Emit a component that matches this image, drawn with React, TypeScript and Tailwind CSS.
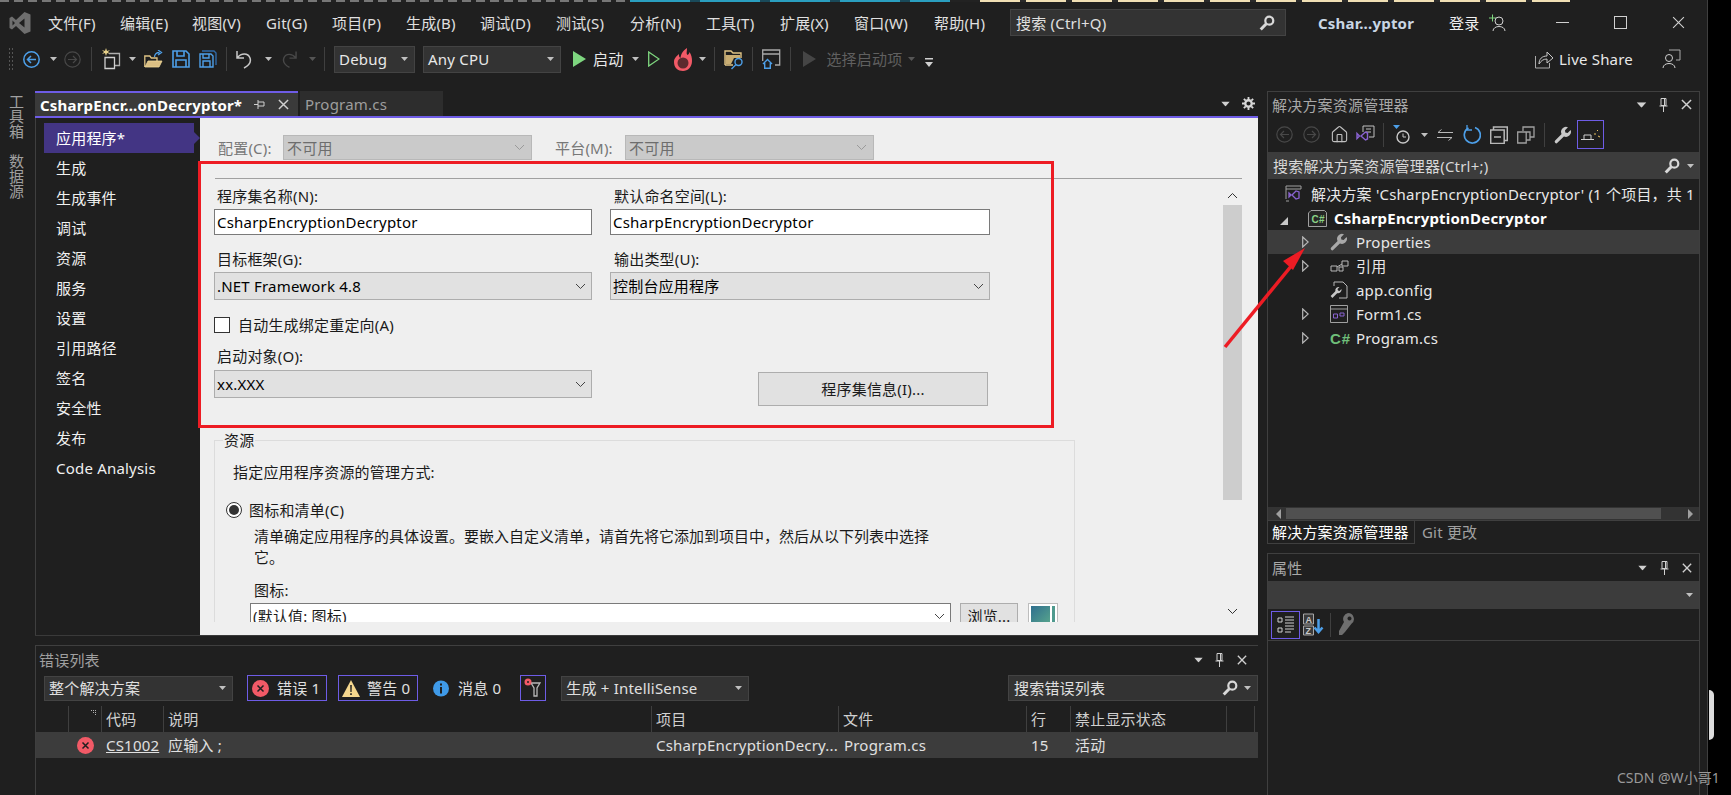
import { House } from "lucide-react";

type P = { className?: string };

const Caret = ({ className = "", fill = "#c0c0c0" }: P & { fill?: string }) => (
  <svg width="7" height="4" viewBox="0 0 7 4" className={`shrink-0 ${className}`}>
    <path d="M0 0h7L3.5 4z" fill={fill} />
  </svg>
);

const Sep = ({ className = "" }: P) => <div className={`h-[24px] w-px shrink-0 bg-[#3f3f3f] ${className}`} />;

const Chevron = ({ className = "", stroke = "#555" }: P & { stroke?: string }) => (
  <svg width="11" height="7" viewBox="0 0 11 7" fill="none" className={`shrink-0 ${className}`}>
    <path d="M1 1l4.5 4.5L10 1" stroke={stroke} />
  </svg>
);

const CloseX = ({ size = 12, stroke = "#d0d0d0", width = 1.6, className = "" }: P & { size?: number; stroke?: string; width?: number }) => (
  <svg width={size} height={size} viewBox="0 0 12 12" className={`shrink-0 ${className}`}>
    <path d="M1 1l10 10M11 1L1 11" stroke={stroke} strokeWidth={width} />
  </svg>
);

const Pin = ({ className = "" }: P) => (
  <svg width="9" height="14" viewBox="0 0 9 14" fill="none" className={`shrink-0 ${className}`}>
    <path d="M2 .5h5v7H2zM.5 8h8M4.500 8v6M5.500 1v6" stroke="#d0d0d0" />
  </svg>
);

const Magnifier = ({ className = "" }: P) => (
  <svg width="16" height="16" viewBox="0 0 16 16" fill="none" className={`shrink-0 ${className}`}>
    <circle cx="10.300" cy="5.700" r="4" stroke="#d8d8d8" strokeWidth="2.200" />
    <path d="M7.300 8.700L1.700 14.500" stroke="#d8d8d8" strokeWidth="3" />
  </svg>
);

const ArrowCircle = ({ color, dir, className = "", width = 1.2 }: P & { color: string; dir: "l" | "r"; width?: number }) => (
  <svg width="17" height="17" viewBox="0 0 17 17" fill="none" className={`shrink-0 ${className}`}>
    <circle cx="8.500" cy="8.500" r="7.700" stroke={color} strokeWidth={width} />
    <path d={dir === "l" ? "M13 8.500H4.500M8 5L4.500 8.500 8 12" : "M4 8.500h8.500M9 5l3.500 3.500L9 12"} stroke={color} strokeWidth={width} />
  </svg>
);

const WrenchIcon = ({ color = "#c8c8c8", className = "" }: P & { color?: string }) => (
  <svg width="18" height="18" viewBox="0 0 18 18" className={`shrink-0 ${className}`}>
    <path d="M2.300 15.700L9.500 8.500" stroke={color} strokeWidth="3.200" strokeLinecap="round" />
    <path d="M7.700 8.300a5 5 0 0 1 6.300-7l-3 3 .3 2.300 2.300.3 3-3a5 5 0 0 1-7 6.300z" fill={color} />
  </svg>
);

const CsBox = () => (
  <svg width="19" height="17" viewBox="0 0 19 17" fill="none" className="shrink-0">
    <path d="M3 .5h13.500L18.500 2.500v14H.5V3z" fill="#252525" stroke="#a0a0a0" />
    <text x="3.500" y="12.500" fontSize="10" fontWeight="700" fill="#89d185" fontFamily="Liberation Sans">C#</text>
  </svg>
);

const ErrorDot = ({ size = 17 }: { size?: number }) => (
  <svg width={size} height={size} viewBox="0 0 17 17" className="shrink-0">
    <circle cx="8.500" cy="8.500" r="8.500" fill="#f25a67" />
    <path d="M5.500 5.500l6 6M11.500 5.500l-6 6" stroke="#1f1f1f" strokeWidth="1.500" />
  </svg>
);

const menus = [
  { label: "文件(F)", w: "w-[72px]" },
  { label: "编辑(E)", w: "w-[72px]" },
  { label: "视图(V)", w: "w-[74px]" },
  { label: "Git(G)", w: "w-[66px]" },
  { label: "项目(P)", w: "w-[74px]" },
  { label: "生成(B)", w: "w-[74px]" },
  { label: "调试(D)", w: "w-[76px]" },
  { label: "测试(S)", w: "w-[74px]" },
  { label: "分析(N)", w: "w-[76px]" },
  { label: "工具(T)", w: "w-[74px]" },
  { label: "扩展(X)", w: "w-[74px]" },
  { label: "窗口(W)", w: "w-[80px]" },
  { label: "帮助(H)", w: "w-[75px]" },
];
const pages = ["生成", "生成事件", "调试", "资源", "服务", "设置", "引用路径", "签名", "安全性", "发布", "Code Analysis"];

const MenuBar = () => (
  <div className="flex h-[41px] shrink-0 items-center">
    <svg width="22" height="24" viewBox="0 0 22 24" className="ml-[9px] mr-[5px] shrink-0">
      <path d="M15.500 1L21.500 3.500v17L15.500 23 7 15l-4 3.500-2.500-1.500V7l2.500-1.500L7 9zM15.500 7.500L10 12l5.500 4.500zM3.500 9.500v5L6 12z" fill="#6e6e6e" fillRule="evenodd" />
    </svg>
    {menus.map((m) => (
      <span key={m.label} className={`${m.w} shrink-0 whitespace-nowrap pl-[12px] text-[#e0e0e0]`}>
        {m.label}
      </span>
    ))}
    <div className="ml-[13px] flex h-[27px] w-[276px] shrink-0 items-center justify-between border border-[#434343] bg-[#333333] pl-[5px] pr-[10px] text-[#e0e0e0]">
      <span>搜索 (Ctrl+Q)</span>
      <Magnifier />
    </div>
    <span className="ml-[32px] w-[131px] shrink-0 font-bold text-[#c9d6e4]">Cshar...yptor</span>
    <span className="shrink-0 text-[#f0f0f0]">登录</span>
    <svg width="18" height="20" viewBox="0 0 18 20" fill="none" className="ml-[10px] shrink-0">
      <path d="M0 5h7M3.500 1.500v7" stroke="#7fd67f" />
      <circle cx="10" cy="8" r="4" stroke="#d0d0d0" />
      <path d="M4 18c0-6 12-6 12 0" stroke="#d0d0d0" />
    </svg>
    <div className="ml-[49px] h-px w-[13px] shrink-0 bg-[#d0d0d0]" />
    <div className="ml-[45px] h-[13px] w-[13px] shrink-0 border border-[#d0d0d0]" />
    <CloseX size={13} width={1} className="ml-[45px]" />
  </div>
);

const ToolBar = () => (
  <div className="flex h-[32px] shrink-0 items-center pl-[8px] pr-[26px] text-[#e8e8e8]">
    <div className="h-[24px] w-[6px] shrink-0 bg-[radial-gradient(#555_1px,transparent_1px)] bg-[length:3px_4px]" />
    <ArrowCircle color="#4d9fe8" dir="l" width={1.5} className="ml-[9px]" />
    <Caret className="ml-[10px]" />
    <ArrowCircle color="#484848" dir="r" className="ml-[7px]" />
    <Sep className="ml-[10px]" />
    <svg width="20" height="22" viewBox="0 0 20 22" fill="none" className="ml-[9px] shrink-0">
      <path d="M5 0l1 3 3-1-2 2 2 2-3-1-1 3-1-3-3 1 2-2-2-2 3 1z" fill="#e8d28a" />
      <path d="M8 5.500h10.500v12H14" stroke="#b0b0b0" strokeWidth="1.300" />
      <path d="M4 9.500h9.500v11H4z" stroke="#d0d0d0" strokeWidth="1.300" />
    </svg>
    <Caret className="ml-[8px]" />
    <svg width="19" height="18" viewBox="0 0 19 18" fill="none" className="ml-[8px] shrink-0">
      <path d="M.8 17V6h5l1.500 2H13v3" stroke="#e0c485" strokeWidth="1.300" />
      <path d="M1 17l3-6h14l-3 6z" fill="#dcc084" stroke="#f0d898" strokeWidth=".8" />
      <path d="M10.500 7c0-3 2-4.500 5-4.500M14 0l3.500 2.500L14 5" stroke="#4d9fe8" strokeWidth="1.300" />
    </svg>
    <svg width="18" height="18" viewBox="0 0 18 18" fill="none" className="ml-[9px] shrink-0">
      <path d="M1 1h13l3 3v13H1zM5 1v5h7V1M4 17v-7h10v7" stroke="#4d9fe8" strokeWidth="1.600" />
    </svg>
    <svg width="18" height="18" viewBox="0 0 18 18" fill="none" className="ml-[9px] shrink-0">
      <path d="M3 1h12l2 2v12" stroke="#2f6aa8" strokeWidth="1.400" />
      <path d="M1 4h11l2 2v11H1zM4 4v4h6V4M4 17v-6h7v6" stroke="#4d9fe8" strokeWidth="1.400" />
    </svg>
    <Sep className="ml-[9px]" />
    <svg width="16" height="19" viewBox="0 0 16 19" fill="none" className="ml-[9px] shrink-0">
      <path d="M1 1v7h7M1.500 7.500C5 3 12 2.500 14 8c1.500 4.500-2 8-6 10" stroke="#c8c8c8" strokeWidth="1.500" />
    </svg>
    <Caret className="ml-[13px]" />
    <svg width="15" height="19" viewBox="0 0 16 19" fill="none" className="ml-[10px] shrink-0">
      <path d="M15 1v7H8M14.500 7.500C11 3 4 2.500 2 8c-1.500 4.500 2 8 6 10" stroke="#484848" strokeWidth="1.500" />
    </svg>
    <Caret className="ml-[12px]" fill="#555" />
    <Sep className="ml-[8px]" />
    <div className="ml-[9px] flex h-[27px] w-[81px] shrink-0 items-center justify-between border border-[#434343] bg-[#333333] pl-[4px] pr-[6px]">
      <span>Debug</span>
      <Caret />
    </div>
    <div className="ml-[8px] flex h-[27px] w-[138px] shrink-0 items-center justify-between border border-[#434343] bg-[#333333] pl-[4px] pr-[6px]">
      <span>Any CPU</span>
      <Caret />
    </div>
    <svg width="13" height="16" viewBox="0 0 13 16" className="ml-[12px] shrink-0">
      <path d="M0 0l13 8-13 8z" fill="#7ed67f" />
    </svg>
    <span className="ml-[7px]">启动</span>
    <Caret className="ml-[9px]" />
    <svg width="12" height="16" viewBox="0 0 12 16" fill="none" className="ml-[9px] shrink-0">
      <path d="M.7 1l10.300 7L.7 15z" stroke="#7ed67f" strokeWidth="1.300" />
    </svg>
    <svg width="18" height="23" viewBox="0 0 18 23" className="ml-[14px] shrink-0">
      <path d="M13 0c0 4-1 5 .5 7 1-.5 2-2 2-3 2 3 2.500 6 2.500 9 0 6-4 10-9 10s-9-3-9-9c0-4 3-6 5-8 0 2 0 3 1.500 4C7 7 8 3 13 0z" fill="#f25a67" />
      <circle cx="9" cy="15" r="5.500" fill="#5c2a2e" />
    </svg>
    <Caret className="ml-[7px]" />
    <Sep className="ml-[8px]" />
    <svg width="20" height="21" viewBox="0 0 20 21" fill="none" className="ml-[9px] shrink-0">
      <path d="M1 16V2h6l2 2h8v5M1 16h8" stroke="#e0c485" strokeWidth="1.400" />
      <path d="M1.500 6h14.500v3h-6l-3 6H1.500z" fill="#c9ad72" />
      <circle cx="14.500" cy="13" r="3.500" stroke="#4d9fe8" strokeWidth="1.400" />
      <path d="M12 15.500L7.500 20" stroke="#4d9fe8" strokeWidth="1.500" />
    </svg>
    <Sep className="ml-[8px]" />
    <svg width="19" height="20" viewBox="0 0 19 20" fill="none" className="ml-[9px] shrink-0">
      <path d="M.7 12V1h17v15H13M.7 5h17" stroke="#a8a8a8" strokeWidth="1.300" />
      <path d="M1 15l4.500-4.500L10 15M2.700 14v5.300h5.600V14" stroke="#4d9fe8" strokeWidth="1.400" />
    </svg>
    <Sep className="ml-[9px]" />
    <svg width="13" height="16" viewBox="0 0 13 16" className="ml-[12px] shrink-0">
      <path d="M0 0l13 8-13 8z" fill="#454545" />
    </svg>
    <span className="ml-[10px] text-[#606060]">选择启动项</span>
    <Caret className="ml-[6px]" fill="#555" />
    <svg width="8" height="10" viewBox="0 0 8 10" className="ml-[10px] mt-[7px] shrink-0">
      <path d="M0 0h8v1.500H0zM0 4h8L4 9z" fill="#d0d0d0" />
    </svg>
    <svg width="19" height="19" viewBox="0 0 19 19" fill="none" className="ml-auto shrink-0">
      <path d="M.5 6v12h14v-5" stroke="#aaa" />
      <path d="M4 14c0-5 3-8 8-8V2l6 6-6 5V9c-4 0-6 2-8 5z" stroke="#c8c8c8" />
    </svg>
    <span className="ml-[5px]">Live Share</span>
    <svg width="19" height="20" viewBox="0 0 19 20" fill="none" className="ml-[29px] shrink-0">
      <path d="M7 1h11v10h-4" stroke="#aaa" />
      <circle cx="7" cy="9" r="3.500" stroke="#d0d0d0" />
      <path d="M1 19c0-6 12-6 12 0" stroke="#d0d0d0" />
    </svg>
  </div>
);

const Field = ({ value }: { value: string }) => (
  <div className="flex h-[26px] items-center border border-[#7a7a7a] bg-white pl-[2px] text-black">{value}</div>
);

const Select = ({ value }: { value: string }) => (
  <div className="flex h-[28px] items-center justify-between border border-[#adadad] bg-[#e1e1e1] pl-[2px] pr-[5px] text-black">
    <span>{value}</span>
    <Chevron stroke="#444" />
  </div>
);

const DisabledSelect = ({ className = "" }: P) => (
  <div className={`flex h-[25px] w-[249px] items-center justify-between border border-[#b8b8b8] bg-[#cacaca] pl-[3px] pr-[6px] text-[#6d6d6d] ${className}`}>
    <span>不可用</span>
    <Chevron stroke="#9a9a9a" />
  </div>
);

const AppPage = () => (
  <div className="flex min-w-0 flex-1 flex-col bg-[#efefef] text-[#1a1a1a]">
    <div className="mt-[17px] flex h-[25px] shrink-0 items-center pl-[18px] text-[#777]">
      <span className="w-[65px]">配置(C):</span>
      <DisabledSelect />
      <span className="ml-[23px] w-[70px]">平台(M):</span>
      <DisabledSelect />
    </div>
    <div className="ml-[15px] mr-[16px] mt-[18px] h-px shrink-0 bg-[#a0a0a0]" />
    <div className="flex">
      <div className="h-[443px] w-[1023px] shrink-0 overflow-hidden pl-[14px]">
        <div className="grid w-[776px] grid-cols-[378px_380px] gap-x-[18px] pt-[7px]">
          <div>
            <div className="mb-[3px] pl-[3px]">程序集名称(N):</div>
            <Field value="CsharpEncryptionDecryptor" />
          </div>
          <div>
            <div className="mb-[3px] pl-[4px]">默认命名空间(L):</div>
            <Field value="CsharpEncryptionDecryptor" />
          </div>
          <div className="mt-[14px]">
            <div className="mb-[3px] pl-[3px]">目标框架(G):</div>
            <Select value=".NET Framework 4.8" />
          </div>
          <div className="mt-[14px]">
            <div className="mb-[3px] pl-[4px]">输出类型(U):</div>
            <Select value="控制台应用程序" />
          </div>
          <div className="col-span-2 mt-[16px] flex h-[18px] items-center">
            <div className="h-[16px] w-[16px] border border-[#333] bg-white" />
            <span className="ml-[8px]">自动生成绑定重定向(A)</span>
          </div>
          <div className="mt-[12px]">
            <div className="mb-[4px] pl-[3px]">启动对象(O):</div>
            <Select value="xx.XXX" />
          </div>
          <div className="mt-[38px] pl-[148px]">
            <div className="flex h-[34px] w-[230px] items-center justify-center border border-[#adadad] bg-[#e1e1e1]">程序集信息(I)...</div>
          </div>
        </div>
        <fieldset className="mt-[24px] h-[400px] w-[861px] border border-[#dcdcdc]">
          <legend className="ml-[8px] px-[1px] leading-5">资源</legend>
          <div className="pl-[18px] pt-[12px]">指定应用程序资源的管理方式:</div>
          <div className="mt-[18px] flex items-center pl-[11px]">
            <div className="flex h-[16px] w-[16px] items-center justify-center rounded-full border border-[#333] bg-white">
              <div className="h-[10px] w-[10px] rounded-full bg-[#333]" />
            </div>
            <span className="ml-[7px]">图标和清单(C)</span>
          </div>
          <div className="mt-[6px] w-[720px] pl-[39px] leading-[21px] tracking-normal">
            清单确定应用程序的具体设置。要嵌入自定义清单，请首先将它添加到项目中，然后从以下列表中选择它。
          </div>
          <div className="mt-[12px] pl-[39px]">图标:</div>
          <div className="mt-[3px] flex items-start pl-[35px]">
            <div className="flex h-[26px] w-[701px] items-center justify-between border border-[#7a7a7a] bg-white pl-[2px] pr-[5px]">
              <span>(默认值: 图标)</span>
              <Chevron stroke="#444" />
            </div>
            <div className="ml-[9px] flex h-[26px] w-[58px] items-center justify-center border border-[#adadad] bg-[#e1e1e1]">浏览...</div>
            <div className="ml-[10px] flex h-[30px] w-[30px] gap-[2px] border border-[#bdbdbd] bg-white p-[2px]">
              <div className="w-[19px] bg-[linear-gradient(135deg,#2f6f8f,#5fae8c)]" />
              <div className="flex-1 bg-[#4f9a8e]" />
            </div>
          </div>
        </fieldset>
      </div>
      <div className="flex h-[443px] w-[19px] shrink-0 flex-col items-center pt-[8px]">
        <Chevron stroke="#333" className="mt-[5px] rotate-180" />
        <div className="mt-[6px] h-[295px] w-full bg-[#cdcdcd]" />
        <Chevron stroke="#333" className="mt-auto mb-[7px]" />
      </div>
    </div>
  </div>
);

const EditorPanel = () => (
  <div className="flex h-[545px] shrink-0 flex-col">
    <div className="flex h-[25px] shrink-0 items-stretch">
      <div className="flex w-[263px] items-center border-t-2 border-[#6e5ce6] bg-[#3a3a3a] pl-[5px]">
        <span className="w-[214px] font-bold text-white">CsharpEncr...onDecryptor*</span>
        <svg width="11" height="11" viewBox="0 0 11 11" fill="none" className="shrink-0">
          <path d="M4 1v9M4 3h6v4H4M0 5.500h4" stroke="#d0d0d0" />
        </svg>
        <CloseX size={11} className="ml-[13px]" />
      </div>
      <div className="ml-[2px] flex w-[143px] items-center bg-[#2d2d2d] pl-[5px] text-[#9d9d9d]">Program.cs</div>
      <div className="ml-auto flex items-center pr-[3px]">
        <Caret fill="#d0d0d0" className="mr-[13px] scale-125" />
        <svg width="13" height="13" viewBox="0 0 14 14" className="shrink-0">
          <circle cx="7" cy="7" r="3.500" fill="none" stroke="#d8d8d8" strokeWidth="2.500" />
          <path d="M7 0v3M7 11v3M0 7h3M11 7h3M2 2l2 2M10 10l2 2M12 2l-2 2M4 10l-2 2" stroke="#d8d8d8" strokeWidth="2" />
        </svg>
      </div>
    </div>
    <div className="h-[2px] shrink-0 bg-[#6e5ce6]" />
    <div className="flex min-h-0 flex-1 border-b border-[#3a3a3a]">
      <div className="w-[165px] shrink-0 border-l border-[#3f3f3f] pl-[8px] pr-[6px] pt-[5px] text-[#f0f0f0]">
        <div className="relative flex h-[30px] items-center bg-[#433584] pl-[12px] text-white">
          应用程序*
          <div className="absolute -right-[6px] top-[9px] h-0 w-0 border-y-[6px] border-l-[6px] border-y-transparent border-l-[#433584]" />
        </div>
        {pages.map((p) => (
          <div key={p} className="flex h-[30px] items-center pl-[12px]">
            {p}
          </div>
        ))}
      </div>
      <AppPage />
    </div>
  </div>
);

const errCols = "grid grid-cols-[32px_33px_62px_488px_187px_188px_44px_156px_28px_4px]";

const ErrorPanel = () => (
  <div className="mt-[9px] flex min-h-0 flex-1 flex-col border-l border-t border-[#3f3f3f] text-[#e0e0e0]">
    <div className="flex h-[27px] shrink-0 items-center pl-[3px] pr-[11px] text-[#a0a0a0]">
      <span>错误列表</span>
      <Caret fill="#d0d0d0" className="ml-auto scale-125" />
      <Pin className="ml-[13px]" />
      <CloseX size={10} className="ml-[13px]" />
    </div>
    <div className="mt-[2px] flex h-[26px] shrink-0 items-center pl-[8px]">
      <div className="flex h-[25px] w-[189px] items-center justify-between border border-[#434343] bg-[#333333] pl-[4px] pr-[6px]">
        <span>整个解决方案</span>
        <Caret />
      </div>
      <div className="ml-[14px] flex h-[26px] w-[80px] items-center border border-[#6e5ce6] pl-[4px]">
        <ErrorDot />
        <span className="ml-[8px]">错误 1</span>
      </div>
      <div className="ml-[11px] flex h-[26px] w-[80px] items-center border border-[#6e5ce6] pl-[3px]">
        <svg width="18" height="17" viewBox="0 0 18 17" className="shrink-0">
          <path d="M9 0l9 17H0z" fill="#f5d78e" />
          <path d="M8.200 5h1.600l-.2 7H8.400zM8.200 13.300h1.600v1.700H8.200z" fill="#1f1f1f" />
        </svg>
        <span className="ml-[7px]">警告 0</span>
      </div>
      <svg width="16" height="17" viewBox="0 0 16 17" className="ml-[15px] shrink-0">
        <circle cx="8" cy="8.500" r="8" fill="#3f9ae8" />
        <path d="M7 7h2v6.500H7zM7 3.500h2v2H7z" fill="#1f1f1f" />
      </svg>
      <span className="ml-[9px]">消息 0</span>
      <div className="ml-[19px] flex h-[26px] w-[26px] items-center justify-center border border-[#6e5ce6]">
        <svg width="18" height="20" viewBox="0 0 18 20" fill="none">
          <path d="M7 5h9l-3 5v8h-3v-8z" stroke="#b8b8b8" strokeWidth="1.300" />
          <circle cx="4" cy="4" r="3.500" fill="#f25a67" />
          <circle cx="4" cy="4" r="1" fill="#1f1f1f" />
        </svg>
      </div>
      <div className="ml-[15px] flex h-[25px] w-[188px] items-center justify-between border border-[#434343] bg-[#333333] pl-[4px] pr-[6px]">
        <span>生成 + IntelliSense</span>
        <Caret />
      </div>
      <div className="ml-auto flex h-[26px] w-[250px] items-center border border-[#434343] bg-[#333333] pl-[5px] pr-[6px]">
        <span>搜索错误列表</span>
        <Magnifier className="ml-auto" />
        <Caret className="ml-[6px]" />
      </div>
    </div>
    <div className={`${errCols} mt-[5px] h-[26px] shrink-0 items-stretch`}>
      <div />
      <div className="flex justify-end border-l border-[#3f3f3f] pr-[5px] pt-[4px]">
        <svg width="5" height="6" viewBox="0 0 5 6">
          <path d="M0 0h1v1H0zM2 0h1v1H2zM4 0h1v1H4zM2 2h1v1H2zM4 2h1v1H4zM4 4h1v1H4z" fill="#b0b0b0" />
        </svg>
      </div>
      {["代码", "说明", "项目", "文件", "行", "禁止显示状态", "", ""].map((h, i) => (
        <div key={i} className="flex items-center overflow-hidden whitespace-nowrap border-l border-[#3f3f3f] pl-[4px] text-[#d0d0d0]">
          {h}
        </div>
      ))}
    </div>
    <div className={`${errCols} h-[26px] shrink-0 items-center bg-[#3c3c3c]`}>
      <div />
      <div className="pl-[9px]">
        <ErrorDot />
      </div>
      <div className="pl-[5px] underline">CS1002</div>
      <div className="pl-[5px]">应输入 ;</div>
      <div className="overflow-hidden whitespace-nowrap pl-[5px]">CsharpEncryptionDecry...</div>
      <div className="pl-[6px]">Program.cs</div>
      <div className="pl-[5px]">15</div>
      <div className="pl-[5px]">活动</div>
    </div>
  </div>
);

const arrowCol = {
  0: "w-[17px]",
  1: "w-[40px] pr-[20px]",
  2: "w-[62px] pr-[21px]",
};

const TreeRow = ({ indent, arrow, icon, children, className = "" }: { indent: 0 | 1 | 2; arrow?: "open" | "closed"; icon: React.ReactNode; children: React.ReactNode; className?: string }) => (
  <div className={`flex h-[24px] items-center text-[#e8e8e8] ${className}`}>
    <div className={`flex shrink-0 justify-end ${arrowCol[indent]}`}>
      {arrow === "open" && <div className="mt-[6px] h-0 w-0 border-b-[8px] border-l-[8px] border-b-[#c8c8c8] border-l-transparent" />}
      {arrow === "closed" && (
        <svg width="7" height="12" viewBox="0 0 7 12" fill="none">
          <path d="M.7 1l5.500 5-5.500 5z" stroke="#b8b8b8" strokeWidth="1.200" />
        </svg>
      )}
    </div>
    <div className="flex w-[26px] shrink-0 items-center">{icon}</div>
    {children}
  </div>
);

const SolutionPanel = () => (
  <div className="flex h-[430px] shrink-0 flex-col border border-[#3f3f3f]">
    <div className="flex h-[25px] shrink-0 items-center pl-[4px] pr-[7px] text-[#a8a8a8]">
      <span>解决方案资源管理器</span>
      <Caret fill="#d0d0d0" className="ml-auto scale-[1.4]" />
      <Pin className="ml-[14px]" />
      <CloseX size={11} className="ml-[13px]" />
    </div>
    <div className="flex h-[35px] shrink-0 items-center pl-[8px]">
      <ArrowCircle color="#484848" dir="l" />
      <ArrowCircle color="#484848" dir="r" className="ml-[10px]" />
      <House size={19} strokeWidth={1.4} color="#c0c0c0" className="ml-[10px] shrink-0" />
      <svg width="20" height="19" viewBox="0 0 20 19" fill="none" className="ml-[7px] shrink-0">
        <path d="M7 7V1h11v11h-5M10 4h5M10 7h5" stroke="#c0c0c0" />
        <path d="M9.500 7L5 11l4.500 4 2-1V8zM1 8.500l2.500 2.500L1 13.500z" stroke="#8a63d2" strokeWidth="1.400" />
      </svg>
      <Sep className="ml-[7px]" />
      <svg width="19" height="20" viewBox="0 0 19 20" fill="none" className="ml-[9px] shrink-0">
        <path d="M0 0h7L3.500 4z" fill="#4d9fe8" />
        <circle cx="10" cy="12" r="6" stroke="#c8c8c8" strokeWidth="1.400" />
        <path d="M10 8.500V12h3" stroke="#c8c8c8" />
      </svg>
      <Caret className="ml-[9px]" />
      <svg width="16" height="12" viewBox="0 0 16 12" fill="none" className="ml-[9px] shrink-0">
        <path d="M16 3.500H1L4.500 .5M0 8.500h15L11.500 11.500" stroke="#b8b8b8" />
      </svg>
      <svg width="18" height="19" viewBox="0 0 18 19" fill="none" className="ml-[10px] shrink-0">
        <path d="M5.500 3A8 8 0 1 0 12 2.500" stroke="#4d9fe8" strokeWidth="1.700" />
        <path d="M4 0v5h5" stroke="#4d9fe8" strokeWidth="1.300" />
      </svg>
      <svg width="18" height="18" viewBox="0 0 18 18" fill="none" className="ml-[9px] shrink-0">
        <path d="M.7 4h13.500v13.500H.7zM3.500 4V1h13.800v13.500h-3M4 11h7" stroke="#b8b8b8" strokeWidth="1.500" />
      </svg>
      <svg width="18" height="18" viewBox="0 0 18 18" fill="none" className="ml-[9px] shrink-0">
        <path d="M6 5V1h11v10h-4M.7 6h8.500v11H.7zM4 6h9v8H9.500" stroke="#a0a0a0" strokeWidth="1.300" />
      </svg>
      <Sep className="ml-[9px]" />
      <WrenchIcon className="ml-[9px]" />
      <div className="ml-[5px] flex h-[29px] w-[27px] shrink-0 items-center justify-center border border-[#6e5ce6]">
        <svg width="20" height="12" viewBox="0 0 20 12" fill="none">
          <path d="M0 10.500h13M3 10V6h7v4" stroke="#d0d0d0" />
          <path d="M13 5h2M16 2l1-1M17 7l2 1" stroke="#e8c060" />
        </svg>
      </div>
    </div>
    <div className="flex h-[27px] shrink-0 items-center bg-[#3c3c3c] pl-[5px] pr-[5px] text-[#d8d8d8]">
      <span>搜索解决方案资源管理器(Ctrl+;)</span>
      <Magnifier className="ml-auto" />
      <Caret className="ml-[7px]" />
    </div>
    <div className="min-h-0 flex-1 overflow-hidden whitespace-nowrap pt-[3px]">
      <TreeRow
        indent={0}
        icon={
          <svg width="18" height="18" viewBox="0 0 18 18" fill="none" className="shrink-0">
            <path d="M1 14V1h15v3M1 4h15M1 16h3" stroke="#a0a0a0" />
            <path d="M11 6L7 10l4 4 3-1V7zM4 8l2 2-2 2z" stroke="#8a63d2" strokeWidth="1.300" />
          </svg>
        }
      >
        <span>解决方案 'CsharpEncryptionDecryptor' (1 个项目，共 1 个)</span>
      </TreeRow>
      <TreeRow indent={1} arrow="open" icon={<CsBox />}>
        <span className="font-bold text-white">CsharpEncryptionDecryptor</span>
      </TreeRow>
      <TreeRow indent={2} arrow="closed" icon={<WrenchIcon color="#a8a8a8" />} className="bg-[#3c3c3c]">
        <span>Properties</span>
      </TreeRow>
      <TreeRow
        indent={2}
        arrow="closed"
        icon={
          <svg width="20" height="14" viewBox="0 0 20 14" fill="none" className="shrink-0">
            <path d="M1 7h6v5H1zM12 2h6v5h-6zM9 8h4v4H9zM7 8l5-3" stroke="#b8b8b8" />
          </svg>
        }
      >
        <span>引用</span>
      </TreeRow>
      <TreeRow
        indent={2}
        icon={
          <svg width="18" height="18" viewBox="0 0 18 18" fill="none" className="shrink-0">
            <path d="M4 5V1h9l4 4v12H9" stroke="#b8b8b8" />
            <path d="M1.500 16L7 10.500" stroke="#c8c8c8" strokeWidth="2.500" />
            <path d="M5.500 10.500a3.500 3.500 0 0 1 4-4.500l-2 2 .5 1.500 1.500.5 2-2a3.500 3.500 0 0 1-4.500 4z" fill="#c8c8c8" />
          </svg>
        }
      >
        <span>app.config</span>
      </TreeRow>
      <TreeRow
        indent={2}
        arrow="closed"
        icon={
          <svg width="18" height="18" viewBox="0 0 18 18" fill="none" className="shrink-0">
            <path d="M.5.5h17v17H.5zM.5 4h17" stroke="#a0a0a0" />
            <path d="M3.500 9h4v4h-4zM10 8h4v3h-4z" stroke="#8a63d2" />
          </svg>
        }
      >
        <span>Form1.cs</span>
      </TreeRow>
      <TreeRow
        indent={2}
        arrow="closed"
        icon={
          <span className="font-['Liberation_Sans'] text-[15px] font-bold leading-none tracking-[1px] text-[#6fbf7a]">C#</span>
        }
      >
        <span>Program.cs</span>
      </TreeRow>
    </div>
    <div className="flex h-[13px] shrink-0 items-center bg-[#333333] pl-[8px] pr-[6px]">
      <div className="h-0 w-0 border-y-[5px] border-r-[5px] border-y-transparent border-r-[#a0a0a0]" />
      <div className="ml-[5px] h-[11px] w-[375px] bg-[#505050]" />
      <div className="ml-auto h-0 w-0 border-y-[5px] border-l-[5px] border-y-transparent border-l-[#a0a0a0]" />
    </div>
  </div>
);

const PropsPanel = () => (
  <div className="mt-[9px] flex min-h-0 flex-1 flex-col border-x border-t border-[#3f3f3f]">
    <div className="flex h-[27px] shrink-0 items-center pl-[4px] pr-[7px] text-[#a8a8a8]">
      <span>属性</span>
      <Caret fill="#d0d0d0" className="ml-auto scale-125" />
      <Pin className="ml-[14px]" />
      <CloseX size={10} className="ml-[13px]" />
    </div>
    <div className="flex h-[28px] shrink-0 items-center justify-end bg-[#3c3c3c] pr-[6px]">
      <Caret />
    </div>
    <div className="flex h-[32px] shrink-0 items-center border-b border-[#3f3f3f] pl-[3px]">
      <div className="flex h-[28px] w-[29px] items-center justify-center border border-[#6e5ce6]">
        <svg width="18" height="20" viewBox="0 0 18 20" fill="none">
          <path d="M1 3h4v4H1zM1 13h4v4H1zM8 2h9M8 5h9M8 8h9M8 11h9M8 14h9M8 17h6" stroke="#d0d0d0" />
        </svg>
      </div>
      <svg width="21" height="23" viewBox="0 0 21 23" fill="none" className="ml-[3px] shrink-0">
        <path d="M.5 1h10v10H.5zM.5 13h10v9H.5z" fill="#3a3a3a" stroke="#a8a8a8" />
        <text x="2.500" y="9.500" fontSize="9" fontWeight="700" fill="#c8c8c8" fontFamily="Liberation Sans">A</text>
        <text x="2.500" y="21" fontSize="9" fontWeight="700" fill="#c8c8c8" fontFamily="Liberation Sans">Z</text>
        <path d="M15.500 6v13M11.500 14.500l4 4.500 4-4.500" stroke="#4d9fe8" strokeWidth="2.500" />
      </svg>
      <Sep className="ml-[6px]" />
      <svg width="16" height="23" viewBox="0 0 16 23" className="ml-[7px] shrink-0">
        <path d="M10 0a6 6 0 0 1 3.500 10.800L7 19l-3 3H1v-4l5-9A6 6 0 0 1 10 0zm1.500 3.500a2 2 0 1 0 .01 0z" fill="#6e6e6e" fillRule="evenodd" />
      </svg>
    </div>
  </div>
);

export default function App() {
  return (
    <div className="relative flex h-[795px] w-[1731px] overflow-hidden bg-black font-['Noto_Sans','Noto_Sans_CJK_SC',sans-serif] text-[15px] leading-5 tracking-[0.2px]">
      <div className="flex h-full w-[1708px] shrink-0 flex-col border-r border-[#3f3f3f] bg-[#1f1f1f]">
        <div className="flex h-[2px] shrink-0">
          <div className="w-[630px] bg-[repeating-linear-gradient(90deg,#777_0,#777_9px,#222_9px,#222_14px)]" />
          <div className="w-[320px] bg-[repeating-linear-gradient(90deg,#2a9fc0_0,#2a9fc0_60px,#1a4a5a_60px,#1a4a5a_70px)]" />
          <div className="w-[30px] bg-[#222]" />
          <div className="w-[590px] bg-[repeating-linear-gradient(90deg,#f0dfb4_0,#f0dfb4_40px,#2a2a2a_40px,#2a2a2a_46px)]" />
        </div>
        <MenuBar />
        <ToolBar />
        <div className="flex min-h-0 flex-1 pt-[16px]">
          <div className="flex w-[35px] shrink-0 flex-col items-center gap-[15px] pr-[4px] pt-[3px] text-[15px] leading-[15px] tracking-normal text-[#a0a0a0]">
            <span className="[writing-mode:vertical-rl]">工具箱</span>
            <span className="[writing-mode:vertical-rl]">数据源</span>
          </div>
          <div className="flex w-[1223px] shrink-0 flex-col">
            <EditorPanel />
            <ErrorPanel />
          </div>
          <div className="ml-[9px] flex w-[433px] shrink-0 flex-col">
            <SolutionPanel />
            <div className="flex h-[24px] shrink-0 -mt-px">
              <div className="flex w-[148px] items-center border border-t-0 border-[#3f3f3f] pl-[4px] text-white">解决方案资源管理器</div>
              <div className="ml-[7px] flex items-center text-[#a0a0a0]">Git 更改</div>
            </div>
            <PropsPanel />
          </div>
        </div>
      </div>

      {/* annotation layer */}
      <div className="absolute left-[198px] top-[161px] h-[267px] w-[856px] border-[3px] border-[#ed1c24]" />
      <svg width="100" height="115" viewBox="0 0 100 115" className="absolute left-[1215px] top-[240px]">
        <path d="M10 107L82 19" stroke="#ed1c24" strokeWidth="3.500" />
        <path d="M90 8L78 30 68 21z" fill="#ed1c24" />
      </svg>
      <div className="absolute left-[1709px] top-[690px] h-[50px] w-[5px] rounded-r-full bg-[#dcdcdc]" />
      <div className="absolute left-[1617px] top-[768px] text-[14px] tracking-normal text-[#9a9a9a]">CSDN @W小哥1</div>
    </div>
  );
}
